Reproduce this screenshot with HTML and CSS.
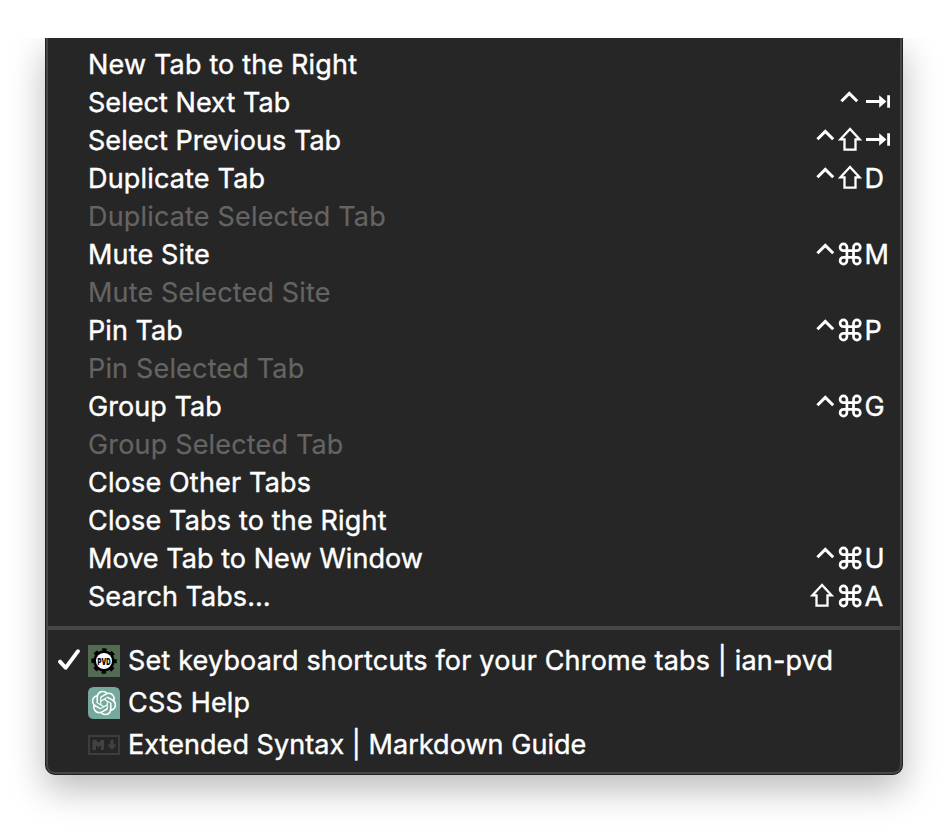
FILE: index.html
```
<!DOCTYPE html>
<html lang="en">
<head>
<meta charset="utf-8">
<title>Tab menu</title>
<link rel="stylesheet" href="styles.css">
</head>
<body>
<svg class="defs" aria-hidden="true">
  <symbol id="ctrl" viewBox="0 0 24 38"><path d="M3.400 17.300 11.300 9.400l7.900 7.900" fill="none" stroke="currentColor" stroke-width="3"/></symbol>
  <symbol id="shift" viewBox="0 0 24 38"><path d="M12 7 2.300 17.400H6.500V27.600H17.500V17.400H21.700Z" fill="none" stroke="currentColor" stroke-width="2.300"/></symbol>
  <symbol id="cmd" viewBox="0 0 24 38"><path d="M8.900 14.700H15.500V21.300H8.900ZM8.900 14.700H5.600A3.400 3.400 0 1 1 8.900 11.300ZM15.500 14.700V11.300A3.400 3.400 0 1 1 18.900 14.700ZM15.500 21.300H18.900A3.400 3.400 0 1 1 15.500 24.700ZM8.900 21.300V24.700A3.400 3.400 0 1 1 5.500 21.300Z" fill="none" stroke="currentColor" stroke-width="2.700"/></symbol>
  <symbol id="tab" viewBox="0 0 28 38"><path d="M4 17.500H18M26.600 11.200V23.800" fill="none" stroke="currentColor" stroke-width="2.800"/><path d="M17.200 11.200 24.400 17.500 17.200 23.800Z" fill="currentColor"/></symbol>
</svg>
<div class="stage">
  <div class="menu">
    <ul class="commands">
      <li class="row"><span>New Tab to the Right</span></li>
      <li class="row"><span class="snug">Select Next Tab</span><span class="keys"><svg class="mod"><use href="#ctrl"/></svg><svg class="key"><use href="#tab"/></svg></span></li>
      <li class="row"><span class="snug">Select Previous Tab</span><span class="keys"><svg class="mod"><use href="#ctrl"/></svg><svg class="mod"><use href="#shift"/></svg><svg class="key"><use href="#tab"/></svg></span></li>
      <li class="row"><span>Duplicate Tab</span><span class="keys"><svg class="mod"><use href="#ctrl"/></svg><svg class="mod"><use href="#shift"/></svg><span class="key">D</span></span></li>
      <li class="row off"><span>Duplicate Selected Tab</span></li>
      <li class="row"><span>Mute Site</span><span class="keys"><svg class="mod"><use href="#ctrl"/></svg><svg class="mod"><use href="#cmd"/></svg><span class="key">M</span></span></li>
      <li class="row off"><span>Mute Selected Site</span></li>
      <li class="row"><span class="snug">Pin Tab</span><span class="keys"><svg class="mod"><use href="#ctrl"/></svg><svg class="mod"><use href="#cmd"/></svg><span class="key">P</span></span></li>
      <li class="row off"><span>Pin Selected Tab</span></li>
      <li class="row"><span class="snug">Group Tab</span><span class="keys"><svg class="mod"><use href="#ctrl"/></svg><svg class="mod"><use href="#cmd"/></svg><span class="key">G</span></span></li>
      <li class="row off"><span>Group Selected Tab</span></li>
      <li class="row"><span>Close Other Tabs</span></li>
      <li class="row"><span>Close Tabs to the Right</span></li>
      <li class="row"><span class="snug">Move Tab to New Window</span><span class="keys"><svg class="mod"><use href="#ctrl"/></svg><svg class="mod"><use href="#cmd"/></svg><span class="key">U</span></span></li>
      <li class="row"><span class="snug">Search Tabs…</span><span class="keys"><svg class="mod wide"><use href="#shift"/></svg><svg class="mod"><use href="#cmd"/></svg><span class="key">A</span></span></li>
    </ul>
    <hr class="rule">
    <ul class="tabs">
      <li class="tab">
        <svg class="check" viewBox="0 0 24 24"><path d="M3 12.600 8.600 18.800 21 2.200" fill="none" stroke="currentColor" stroke-width="3.900" stroke-linecap="round" stroke-linejoin="round"/></svg>
        <svg class="favicon" viewBox="0 0 32 32"><path fill="#536b51" d="M0 0h32v32H0z"/><circle cx="16" cy="16" r="10.600"/><circle cx="16" cy="16" r="11" fill="none" stroke="#000" stroke-width="3.400" stroke-dasharray="4.400 4.240" stroke-dashoffset="2.200"/><circle cx="16" cy="16" r="8" fill="#fff"/><text class="badge" x="16" y="19.500" text-anchor="middle" textLength="13" lengthAdjust="spacingAndGlyphs">PVD</text></svg>
        <span>Set keyboard shortcuts for your Chrome tabs | ian-pvd</span>
      </li>
      <li class="tab">
        <span class="check"></span>
        <svg class="favicon" viewBox="0 0 32 32"><path fill="#75a99c" d="M6 0h20q6 0 6 6v26H6q-6 0-6-6V6q0-6 6-6z"/><svg x="3.600" y="3.600" width="24.800" height="24.800" viewBox="0 0 24 24"><path fill="#fff" d="M22.28 9.82a5.98 5.98 0 0 0-.52-4.91 6.05 6.05 0 0 0-6.51-2.9A6.07 6.07 0 0 0 4.98 4.18a5.98 5.98 0 0 0-4 2.9 6.05 6.05 0 0 0 .74 7.1 5.98 5.98 0 0 0 .51 4.91 6.05 6.05 0 0 0 6.51 2.9A5.98 5.98 0 0 0 13.26 24a6.06 6.06 0 0 0 5.77-4.21 5.99 5.99 0 0 0 4-2.9 6.06 6.06 0 0 0-.75-7.07zm-9.02 12.61a4.48 4.48 0 0 1-2.88-1.04l.14-.08 4.78-2.76a.8.8 0 0 0 .39-.68v-6.74l2.02 1.17a.07.07 0 0 1 .04.05v5.58a4.5 4.5 0 0 1-4.49 4.5zM3.6 18.3a4.47 4.47 0 0 1-.54-3.01l.14.09 4.78 2.76a.77.77 0 0 0 .78 0l5.84-3.37v2.33a.08.08 0 0 1-.03.06L9.74 19.95A4.5 4.5 0 0 1 3.6 18.3zM2.34 7.9a4.49 4.49 0 0 1 2.37-1.98V11.6a.77.77 0 0 0 .39.68l5.81 3.35-2.02 1.17a.08.08 0 0 1-.07 0l-4.83-2.79A4.5 4.5 0 0 1 2.34 7.87zm16.6 3.85-5.84-3.38 2.02-1.17a.08.08 0 0 1 .07 0l4.83 2.79a4.49 4.49 0 0 1-.68 8.11v-5.68a.79.79 0 0 0-.4-.67zm2.01-3.02-.14-.09-4.77-2.78a.78.78 0 0 0-.79 0L9.41 9.23V6.9a.07.07 0 0 1 .03-.06l4.83-2.79a4.5 4.5 0 0 1 6.68 4.66zM8.31 12.86l-2.02-1.16a.08.08 0 0 1-.04-.06V6.07a4.5 4.5 0 0 1 7.38-3.45l-.14.08-4.78 2.76a.8.8 0 0 0-.39.68zm1.1-2.36 2.6-1.5 2.6 1.5v3l-2.6 1.5-2.6-1.5z"/></svg></svg>
        <span>CSS Help</span>
      </li>
      <li class="tab">
        <span class="check"></span>
        <svg class="favicon" viewBox="0 0 32 32"><path d="M1 7h30v18H1z" fill="none" stroke="#3d3d3d" stroke-width="2"/><path d="M4.500 21V11H8l2.500 3L13 11h3v10h-3v-5l-2.500 2.500L8 16v5zM22.500 11h3v4.500h3.200L24 21l-4.700-5.500h3.200z" fill="#424242"/></svg>
        <span class="snug">Extended Syntax | Markdown Guide</span>
      </li>
    </ul>
  </div>
</div>
</body>
</html>
```

FILE: styles.css
```
* { box-sizing: border-box; }
body {
  margin: 0;
  background: #fff;
  font: 27px/38px Inter, "Liberation Sans", sans-serif;
  letter-spacing: .17px;
  color: #fff;
  -webkit-text-stroke: .4px currentColor;
}
ul { list-style: none; margin: 0; padding: 0; }
.defs { display: none; }
.stage {
  margin-top: 38px;
  height: 790px;
  padding: 0 45px;
  overflow: hidden;
}
.menu {
  width: 858px;
  height: 737px;
  padding-top: 8px;
  background: #262626;
  border: 1px solid #202020;
  border-top: 0;
  border-radius: 0 0 10px 10px;
  box-shadow: inset 2px 0 #464646, inset -2px 0 #464646, inset 0 -2px #464646, 0 14px 36px rgba(0, 0, 0, .28);
}
.row {
  display: flex;
  justify-content: space-between;
  height: 38px;
  padding: 0 8px 0 42px;
  white-space: nowrap;
}
.off { color: #646464; -webkit-text-stroke-width: .2px; }
.snug { letter-spacing: .05px; }
.keys { display: flex; }
.mod { width: 24px; height: 38px; }
.wide { margin-right: 4px; }
.key { width: 32px; height: 38px; padding-left: 2.5px; }
svg.key { width: 28px; padding: 0; margin-right: 4px; }
.rule {
  height: 4px;
  margin: 10px 0 10px;
  border: 0;
  background: #464646;
}
.tab {
  display: flex;
  align-items: center;
  height: 42px;
  padding-left: 11px;
  white-space: nowrap;
}
.check { width: 24px; height: 24px; margin-right: 7px; }
.favicon { width: 32px; height: 32px; margin-right: 8px; }
.badge { font: 900 9px Inter, sans-serif; letter-spacing: 0; -webkit-text-stroke: 0; }
```
